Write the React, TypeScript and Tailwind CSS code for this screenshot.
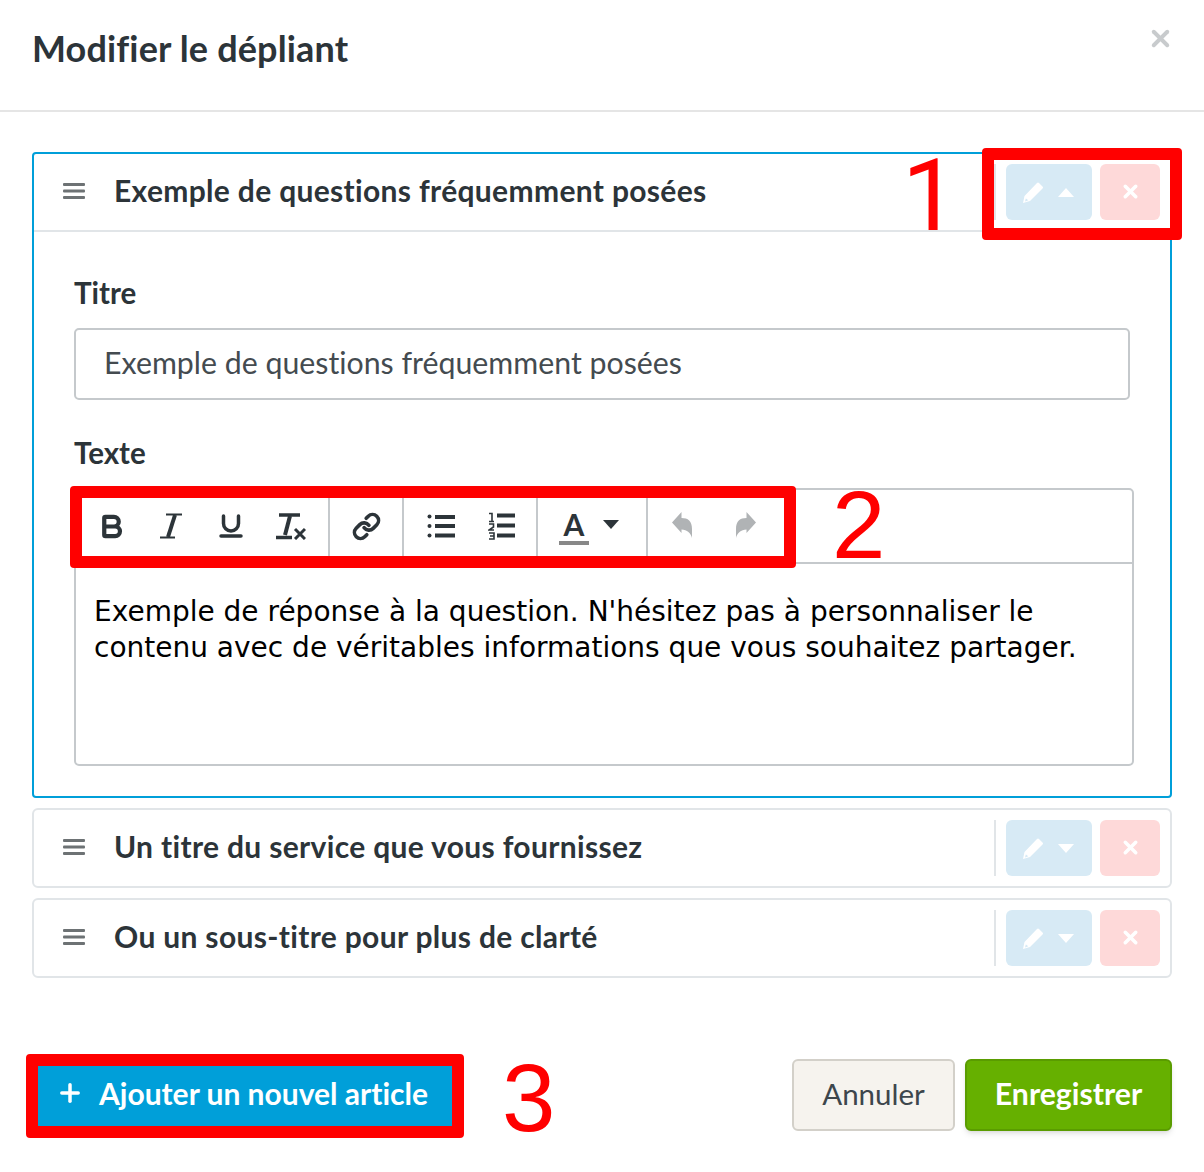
import { Bold, Underline, Link, X, Plus } from "lucide-react";

const font = "font-['Lato','Noto_Sans',sans-serif] [font-variant-ligatures:none]";

function Grip() {
  return (
    <svg width="24" height="16" viewBox="0 0 24 16" className="shrink-0 mb-[2px]">
      <rect x="1" y="0" width="22" height="3" rx="1" fill="#6d7274" />
      <rect x="1" y="6.5" width="22" height="3" rx="1" fill="#6d7274" />
      <rect x="1" y="13" width="22" height="3" rx="1" fill="#6d7274" />
    </svg>
  );
}

function Pencil() {
  return (
    <svg width="20" height="21" viewBox="0 0 20 21">
      <path
        fillRule="evenodd"
        fill="#fff"
        d="M0 21 L1.5 14 L14 1 Q15 0 16 1 L19.5 4.5 Q20.5 5.5 19.5 6.5 L7 19 Z M2 19.5 L5 18.6 Q4.6 16.6 2.8 16.4 Z"
      />
    </svg>
  );
}

function Actions({ open }: { open?: boolean }) {
  return (
    <div className="flex items-center h-[56px]">
      <div className="w-[2px] h-[56px] bg-[#e1e5e8] mr-[10px]" />
      <button className="w-[86px] h-[56px] rounded-[6px] bg-[#d7eaf5] flex items-center pl-[17px] gap-[15px] text-white">
        <Pencil />
        <svg width="16" height="9" viewBox="0 0 16 9">
          <path d={open ? "M0 9 L8 0 L16 9 Z" : "M0 0 L16 0 L8 9 Z"} fill="#fff" />
        </svg>
      </button>
      <button className="w-[60px] h-[56px] ml-[8px] rounded-[6px] bg-[#fed9d9] flex items-center justify-center pb-[1px] text-white">
        <X size={21} strokeWidth={4} />
      </button>
    </div>
  );
}

function Row({ title, open }: { title: string; open?: boolean }) {
  return (
    <div className={`flex items-center pl-[28px] pr-[10px] ${open ? "h-[78px] border-b-2 border-[#e1e5e8]" : "h-[76px]"}`}>
      <Grip />
      <span className="ml-[28px] flex-1 pb-[3px] text-[30px] tracking-[0.33px] font-bold text-[#2c3439]">{title}</span>
      <Actions open={open} />
    </div>
  );
}

function ItalicIcon() {
  return (
    <svg width="24" height="26" viewBox="0 0 24 26" fill="none" stroke="#2c3439">
      <path d="M7 1.5 H23" strokeWidth="2" />
      <path d="M16 2 L9 24" strokeWidth="4" />
      <path d="M1 24.5 H16" strokeWidth="2" />
    </svg>
  );
}

function TxIcon() {
  return (
    <svg width="30" height="28" viewBox="0 0 30 28" fill="none" stroke="#2c3439">
      <path d="M3 3 H24" strokeWidth="3.5" />
      <path d="M14 4 L9 23" strokeWidth="4" />
      <path d="M0 25.5 H16" strokeWidth="3.5" />
      <path d="M19 17 L29 27 M29 17 L19 27" strokeWidth="3" />
    </svg>
  );
}

function ListIcon() {
  return (
    <svg width="28" height="24" viewBox="0 0 28 24" fill="#2c3439">
      <circle cx="2.5" cy="2.5" r="2" />
      <circle cx="2.5" cy="12" r="2" />
      <circle cx="2.5" cy="21.5" r="2" />
      <rect x="8" y="1" width="20" height="4" />
      <rect x="8" y="10" width="20" height="4" />
      <rect x="8" y="19.5" width="20" height="4" />
    </svg>
  );
}

function OrderedIcon() {
  return (
    <svg width="27" height="28" viewBox="0 0 27 28" fill="none" stroke="#2c3439" strokeWidth="1.6">
      <path d="M1 1.5 H4 V9 M1 9.5 H6" />
      <path d="M1 12 H5.5 V15 L1 18 H6" />
      <path d="M1 21 H6 V27 H1 M2 24 H6" />
      <path d="M9 3.5 H27 M9 13.5 H27 M9 23.5 H27" strokeWidth="4" />
    </svg>
  );
}

function ArrowIcon({ flip }: { flip?: boolean }) {
  return (
    <svg width="20" height="27" viewBox="0 0 20 27" className={flip ? "-scale-x-100" : ""}>
      <path d="M0 10.5 L9.5 0 V6 C16 6 20 9 20 17 V26 C19 21 15 18 9.5 17.5 V21 Z" fill="#b0b3b5" />
    </svg>
  );
}

function Tool({ children }: { children: React.ReactNode }) {
  return <span className="w-[60px] flex items-center justify-center text-[#2c3439]">{children}</span>;
}

function Toolbar() {
  return (
    <div className="flex h-[74px] border-b-2 border-[#c5c9cc]">
      <div className="flex w-[254px] pl-[5px] border-r-2 border-[#c5c9cc]">
        <Tool><Bold size={29} strokeWidth={3.5} /></Tool>
        <Tool><ItalicIcon /></Tool>
        <Tool><Underline size={30} strokeWidth={2.8} /></Tool>
        <Tool><TxIcon /></Tool>
      </div>
      <div className="flex w-[74px] items-center justify-center border-r-2 border-[#c5c9cc] text-[#2c3439]">
        <Link size={29} strokeWidth={3} />
      </div>
      <div className="flex w-[134px] pl-[7px] pb-[1px] border-r-2 border-[#c5c9cc]">
        <Tool><ListIcon /></Tool>
        <Tool><OrderedIcon /></Tool>
      </div>
      <div className="flex w-[110px] items-center border-r-2 border-[#c5c9cc] pl-[21px]">
        <span className="flex flex-col w-[30px] items-center">
          <span className="text-[30px] leading-[34px] font-bold text-[#2c3439]">A</span>
          <span className="w-[30px] h-[4px] bg-[#888888]" />
        </span>
        <svg width="16" height="9" viewBox="0 0 16 9" className="ml-[14px] mb-[4px]">
          <path d="M0 0 L16 0 L8 9 Z" fill="#2c3439" />
        </svg>
      </div>
      <div className="flex items-center pl-[24px] gap-[44px] pb-[2px]">
        <ArrowIcon />
        <ArrowIcon flip />
      </div>
    </div>
  );
}

export default function App() {
  return (
    <div className={`relative w-[1204px] h-[1172px] overflow-hidden bg-white ${font}`}>
      <header className="h-[112px] border-b-2 border-[#e5e5e5] pl-[32px] flex items-start justify-between">
        <h1 className="mt-[26px] text-[36px] tracking-[0.15px] leading-[44px] font-bold text-[#2c3439]">Modifier le dépliant</h1>
        <X size={27} strokeWidth={3.5} className="mt-[25px] mr-[30px] text-[#c8cbcd]" />
      </header>

      <main className="px-[32px] pt-[40px]">
        <section className="h-[646px] rounded-[4px] border-2 border-[#009fd9]">
          <Row title="Exemple de questions fréquemment posées" open />
          <div className="pl-[40px] pr-[40px]">
            <label className="block mt-[43px] text-[29.5px] leading-[36px] font-bold text-[#2c3439]">Titre</label>
            <div className="mt-[17px] h-[72px] rounded-[5px] border-2 border-[#c5c9cc] pl-[28px] pb-[2px] flex items-center text-[30.3px] text-[#444b50]">
              Exemple de questions fréquemment posées
            </div>
            <label className="block mt-[35px] text-[29.5px] leading-[36px] font-bold text-[#2c3439]">Texte</label>
            <div className="mt-[17px] h-[278px] w-[1060px] rounded-[5px] border-2 border-[#c5c9cc]">
              <Toolbar />
              <p className="pl-[18px] pt-[30px] text-[28px] leading-[36px] text-black font-['DejaVu_Sans',sans-serif]">
                Exemple de réponse à la question. N'hésitez pas à personnaliser le
                <br />
                contenu avec de véritables informations que vous souhaitez partager.
              </p>
            </div>
          </div>
        </section>
        <section className="mt-[10px] h-[80px] rounded-[6px] border-2 border-[#e1e5e8]">
          <Row title="Un titre du service que vous fournissez" />
        </section>
        <section className="mt-[10px] h-[80px] rounded-[6px] border-2 border-[#e1e5e8]">
          <Row title="Ou un sous-titre pour plus de clarté" />
        </section>
      </main>

      <footer className="mt-[81px] pl-[38px] pr-[32px] flex items-center">
        <button className="w-[414px] h-[62px] bg-[#009fd9] flex items-center pl-[18px] pb-[4px] gap-[15px] text-[30px] font-bold text-white">
          <Plus size={28} strokeWidth={3} />
          Ajouter un nouvel article
        </button>
        <div className="ml-auto flex gap-[10px]">
          <button className="w-[163px] h-[72px] rounded-[6px] border-2 border-[#d3d0c9] bg-[#f6f3ee] pb-[2px] text-[29.5px] text-[#3d464c]">Annuler</button>
          <button className="w-[207px] h-[72px] rounded-[6px] border-2 border-[#5a9c00] bg-[#66b000] pb-[2px] text-[30.2px] font-bold text-white shadow-md">Enregistrer</button>
        </div>
      </footer>

      {/* annotations */}
      <div className="absolute left-[982px] top-[148px] w-[200px] h-[92px] rounded-[4px] border-[12px] border-[#ff0000]" />
      <div className="absolute left-[70px] top-[486px] w-[726px] h-[82px] rounded-[4px] border-[12px] border-[#ff0000]" />
      <div className="absolute left-[26px] top-[1054px] w-[438px] h-[84px] rounded-[4px] border-[12px] border-[#ff0000]" />
      <span className="absolute left-[902px] top-[141px] text-[100px] leading-[110px] text-[#ff0000] font-['Roboto',sans-serif]">1</span>
      <span className="absolute left-[832px] top-[470px] text-[96px] leading-[110px] text-[#ff0000] font-['Liberation_Sans',sans-serif]">2</span>
      <span className="absolute left-[502px] top-[1043px] text-[96px] leading-[110px] text-[#ff0000] font-['Liberation_Sans',sans-serif]">3</span>
    </div>
  );
}
